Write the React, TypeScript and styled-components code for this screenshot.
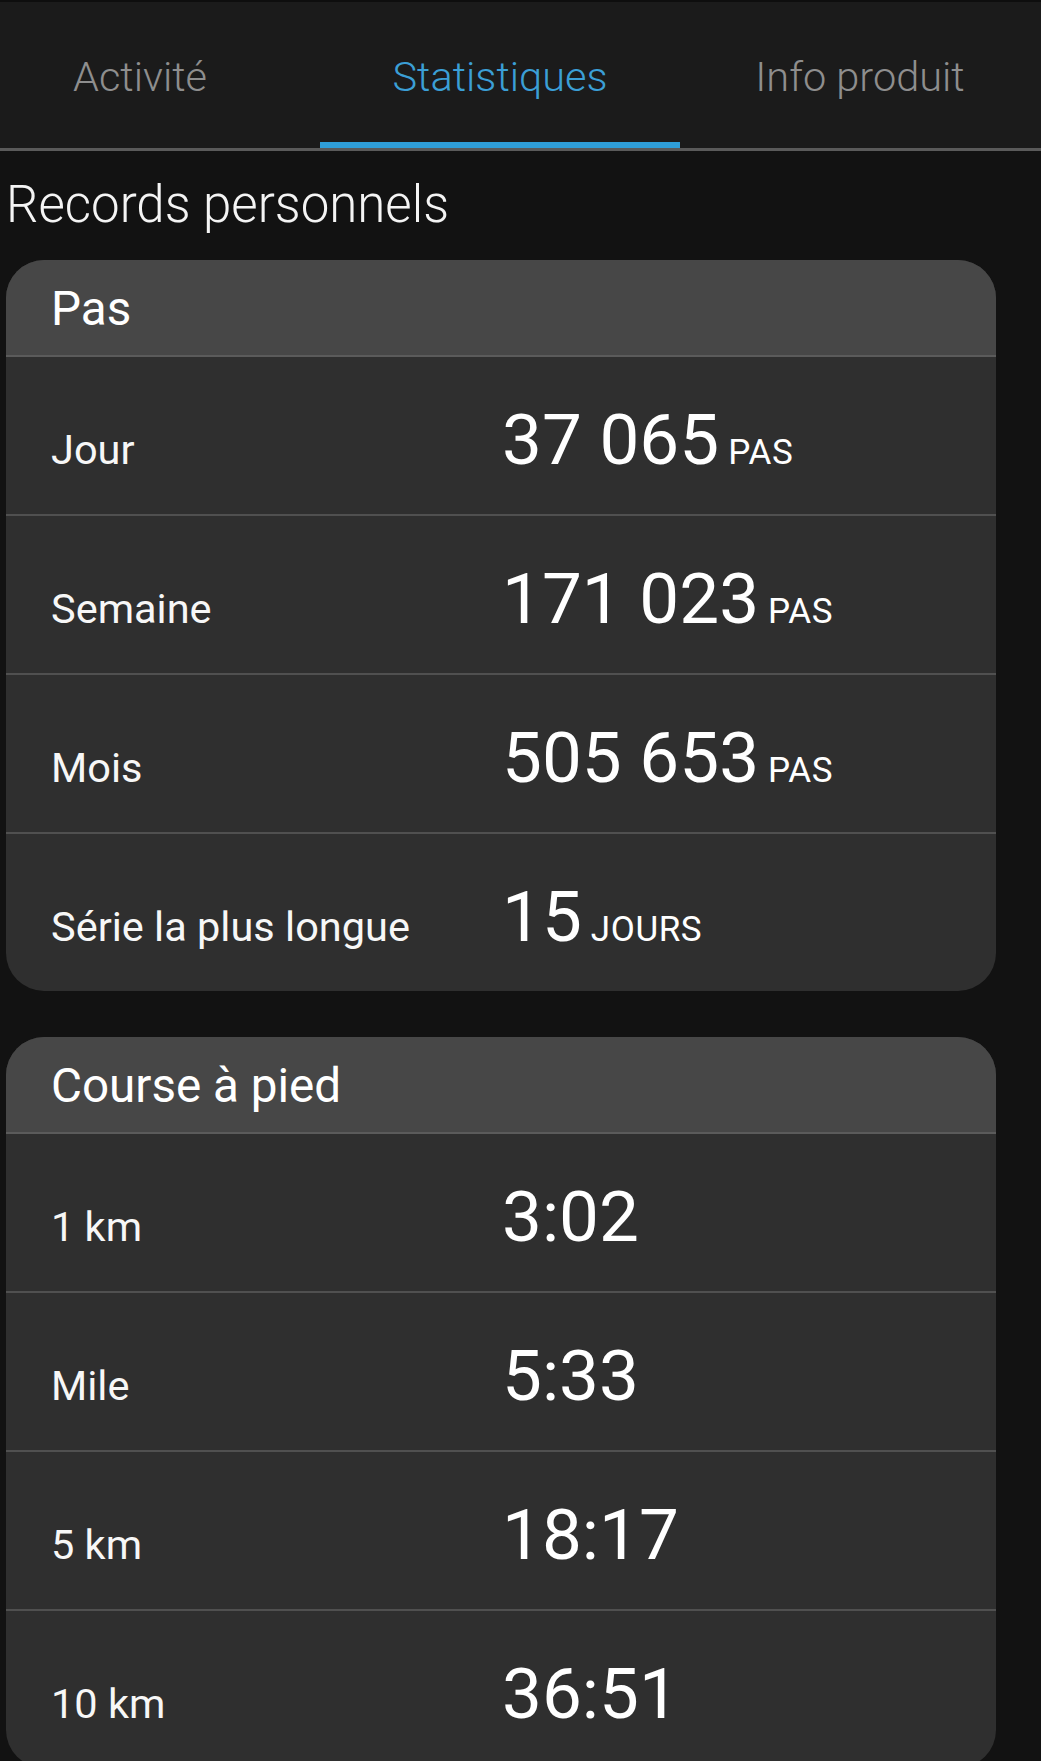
import React from "react";
import styled, { createGlobalStyle } from "styled-components";

const GlobalStyle = createGlobalStyle`
  *, *::before, *::after { box-sizing: border-box; }
  html, body { margin: 0; padding: 0; background: #121212; }
  body {
    font-family: Roboto, "Noto Sans", "Liberation Sans", sans-serif;
    color: #ffffff;
    -webkit-font-smoothing: antialiased;
  }
`;

const Page = styled.div`
  width: 1041px;
  min-height: 1761px;
  background: #121212;
  overflow: hidden;
`;

const TabBar = styled.nav`
  display: flex;
  background: #1b1b1b;
  border-top: 2px solid #0e0e0e;
  border-bottom: 3px solid #5a5a5a;
  overflow: hidden;
`;

const TabStrip = styled.div`
  display: flex;
  margin-left: -40px;
`;

const Tab = styled.div<{ $active?: boolean }>`
  flex: 0 0 360px;
  height: 146px;
  padding-top: 51px;
  text-align: center;
  font-size: 41.5px;
  line-height: 48px;
  font-weight: 300;
  color: ${(p) => (p.$active ? "#3b9fd6" : "#8e8e8e")};
  box-shadow: ${(p) => (p.$active ? "inset 0 -6px 0 #2f9ed8" : "none")};
`;

const Title = styled.h1`
  margin: 24px 0 25px 6px;
  font-size: 51px;
  line-height: 60px;
  font-weight: 300;
  color: #f4f4f4;
`;

const Card = styled.section`
  margin: 0 0 46px 6px;
  width: 990px;
  background: #2f2f2f;
  border-radius: 38px;
  overflow: hidden;
`;

const CardHeader = styled.header`
  height: 97px;
  padding: 21px 0 0 45px;
  background: #474747;
  border-bottom: 2px solid #5b5b5b;
  font-size: 47.6px;
  line-height: 56px;
  font-weight: 400;
  color: #ffffff;
`;

const Row = styled.div`
  display: flex;
  align-items: baseline;
  height: 159px;
  padding: 41px 0 0 45px;
  border-bottom: 2px solid #505050;
  &:last-child {
    border-bottom: none;
    height: 157px;
  }
`;

const Label = styled.span`
  flex: 0 0 451px;
  font-size: 41.5px;
  line-height: 48px;
  font-weight: 400;
  color: #f7f7f7;
`;

const Value = styled.span`
  font-size: 71px;
  line-height: 84px;
  font-weight: 400;
  color: #ffffff;
`;

const Unit = styled.span`
  margin-left: 9px;
  font-size: 35px;
  line-height: 40px;
  font-weight: 400;
  letter-spacing: 0.6px;
  color: #ffffff;
`;

type Stat = { label: string; value: string; unit?: string };

const steps: Stat[] = [
  { label: "Jour", value: "37 065", unit: "PAS" },
  { label: "Semaine", value: "171 023", unit: "PAS" },
  { label: "Mois", value: "505 653", unit: "PAS" },
  { label: "Série la plus longue", value: "15", unit: "JOURS" },
];

const running: Stat[] = [
  { label: "1 km", value: "3:02" },
  { label: "Mile", value: "5:33" },
  { label: "5 km", value: "18:17" },
  { label: "10 km", value: "36:51" },
];

function RecordCard({ title, stats }: { title: string; stats: Stat[] }) {
  return (
    <Card>
      <CardHeader>{title}</CardHeader>
      {stats.map((s) => (
        <Row key={s.label}>
          <Label>{s.label}</Label>
          <Value>{s.value}</Value>
          {s.unit && <Unit>{s.unit}</Unit>}
        </Row>
      ))}
    </Card>
  );
}

export default function App() {
  return (
    <>
      <GlobalStyle />
      <Page>
        <TabBar>
          <TabStrip>
            <Tab>Activité</Tab>
            <Tab $active>Statistiques</Tab>
            <Tab>Info produit</Tab>
          </TabStrip>
        </TabBar>
        <Title>Records personnels</Title>
        <RecordCard title="Pas" stats={steps} />
        <RecordCard title="Course à pied" stats={running} />
      </Page>
    </>
  );
}
